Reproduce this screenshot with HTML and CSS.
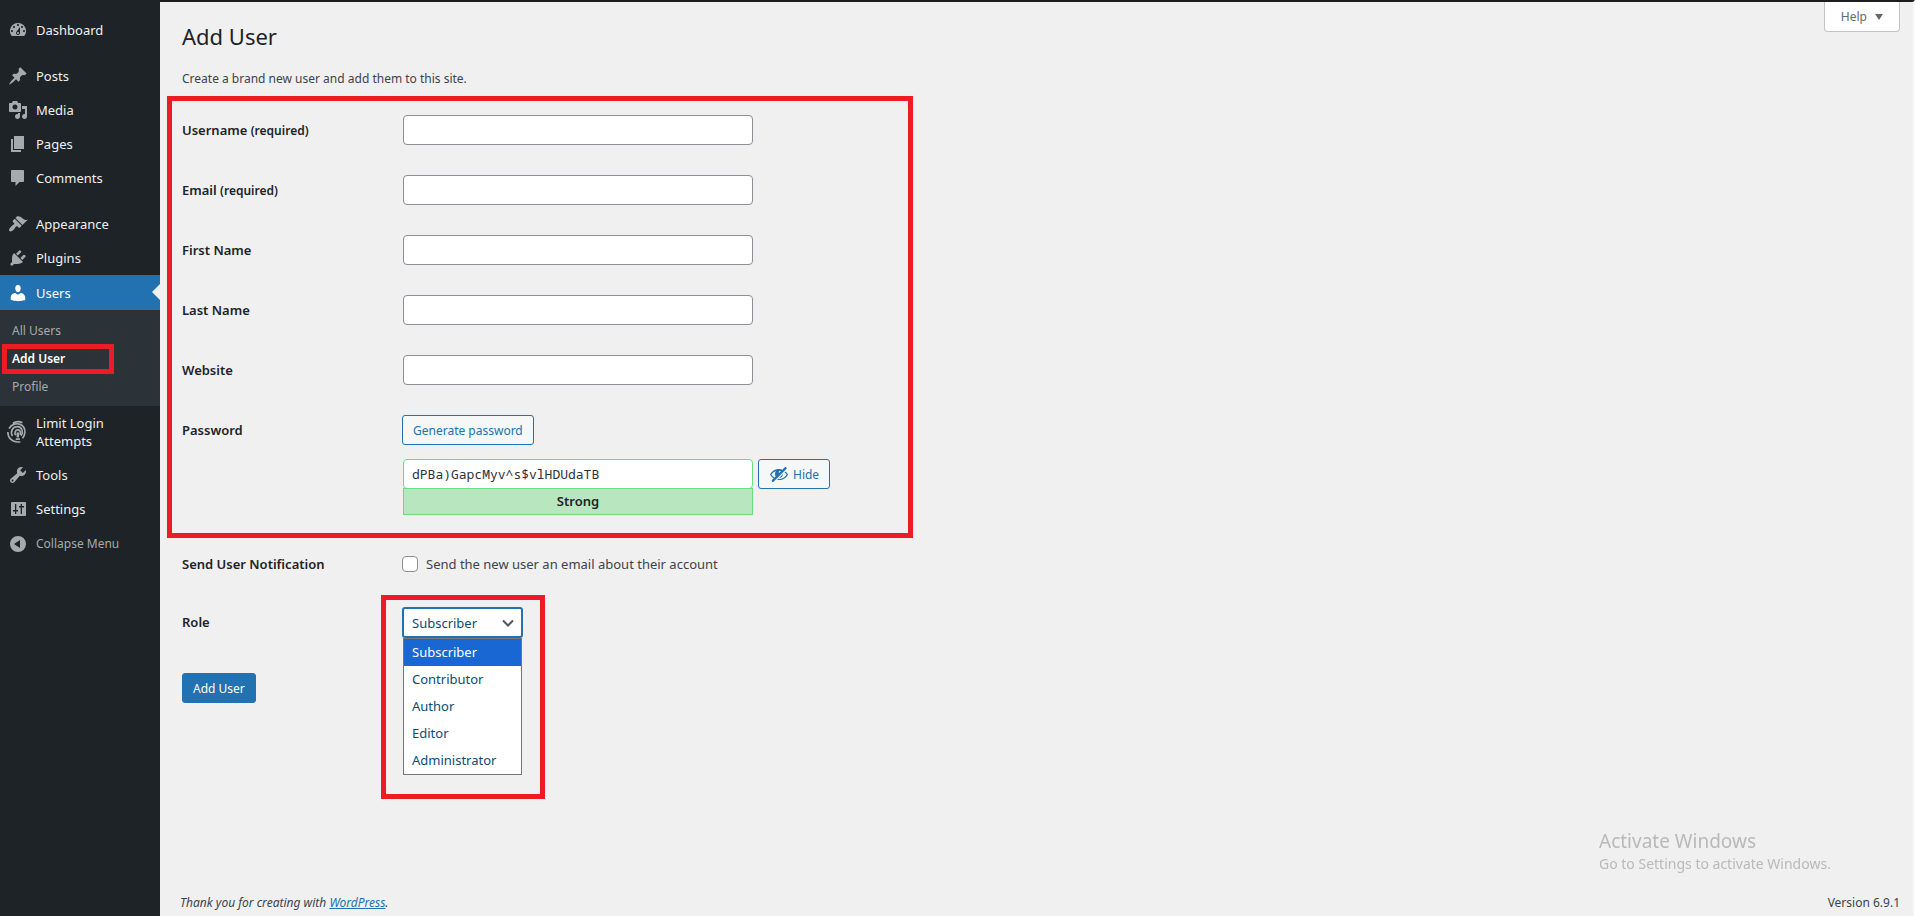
FILE: index.html
```html
<!DOCTYPE html>
<html lang="en">
    <head>
        <meta charset="UTF-8">
        <meta name="viewport" content="width=device-width, initial-scale=1.0">
        <title>Add User</title>
        <link rel="stylesheet" href="styles.css">
    </head>
    <body>
        <nav class="sidebar">
            <ul class="menu">
                <li>
                    <a href="#"><svg class="icon" viewBox="0 0 20 20"><path d="M3.76 16h12.48A7.998 7.998 0 0 0 10 3a7.998 7.998 0 0 0-6.24 13zM10 4c.55 0 1 .45 1 1s-.45 1-1 1-1-.45-1-1 .45-1 1-1zM6 6c.55 0 1 .45 1 1s-.45 1-1 1-1-.45-1-1 .45-1 1-1zm8 0c.55 0 1 .45 1 1s-.45 1-1 1-1-.45-1-1 .45-1 1-1zm-5.37 5.55L12 7v6c0 1.1-.9 2-2 2s-2-.9-2-2c0-.57.24-1.08.63-1.45zM4 10c.55 0 1 .45 1 1s-.45 1-1 1-1-.45-1-1 .45-1 1-1zm12 0c.55 0 1 .45 1 1s-.45 1-1 1-1-.45-1-1 .45-1 1-1zm-5 3c0-.55-.45-1-1-1s-1 .45-1 1 .45 1 1 1 1-.45 1-1z"/></svg>Dashboard</a>
                </li>
                <li class="group-start">
                    <a href="#"><svg class="icon" viewBox="0 0 20 20"><path d="M10.44 3.02l1.82-1.82 6.36 6.35-1.83 1.82c-1.05-.68-2.48-.57-3.41.36l-.75.75c-.92.93-1.04 2.35-.35 3.41l-1.83 1.82-2.41-2.41-2.8 2.79c-.42.42-3.38 2.71-3.8 2.29s1.86-3.39 2.28-3.81l2.79-2.79L4.1 9.36l1.83-1.82c1.05.69 2.48.57 3.4-.36l.75-.75c.93-.92 1.05-2.35.36-3.41z"/></svg>Posts</a>
                </li>
                <li>
                    <a href="#"><svg class="icon" viewBox="0 0 20 20"><path d="M13 11V4c0-.55-.45-1-1-1h-1.67L9 1H5L3.67 3H2c-.55 0-1 .45-1 1v7c0 .55.45 1 1 1h10c.55 0 1-.45 1-1zM7 4.500c1.380 0 2.500 1.120 2.500 2.500S8.380 9.500 7 9.500 4.500 8.380 4.500 7 5.620 4.500 7 4.500zM14 6h5v10.500c0 1.380-1.120 2.500-2.500 2.500S14 17.880 14 16.500s1.120-2.500 2.500-2.500c.17 0 .34.02.5.05V9h-3V6zm-4 8.050V13h2v3.500c0 1.380-1.120 2.500-2.500 2.500S7 17.880 7 16.500 8.120 14 9.500 14c.17 0 .34.02.5.05z"/></svg>Media</a>
                </li>
                <li>
                    <a href="#"><svg class="icon" viewBox="0 0 20 20"><path d="M6 15V2h10v13H6zm-1 1h8v2H3V5h2v11z"/></svg>Pages</a>
                </li>
                <li>
                    <a href="#"><svg class="icon" viewBox="0 0 20 20"><path d="M4 2h11c.6 0 1 .4 1 1v10c0 .6-.4 1-1 1h-3.500l-4 4v-4H4c-.6 0-1-.4-1-1V3c0-.6.4-1 1-1z"/></svg>Comments</a>
                </li>
                <li class="group-start">
                    <a href="#"><svg class="icon" viewBox="0 0 20 20"><path d="M14.48 11.06L7.41 3.99l1.5-1.5c.5-.56 2.3-.47 3.51.32 1.21.8 1.43 1.28 2.91 2.1 1.18.64 2.45 1.26 4.45.85zm-.71.71L6.7 4.7 4.93 6.47c-.39.39-.39 1.02 0 1.41l1.06 1.06c.39.39.39 1.03 0 1.42-.6.6-1.43 1.11-2.21 1.69-.35.26-.7.53-1.01.84C1.43 14.23.4 16.08 1.4 17.07c.99 1 2.84-.03 4.18-1.36.31-.31.58-.66.85-1.02.57-.78 1.08-1.61 1.69-2.21.39-.39 1.02-.39 1.41 0l1.06 1.06c.39.39 1.02.39 1.41 0z"/></svg>Appearance</a>
                </li>
                <li>
                    <a href="#"><svg class="icon" viewBox="0 0 20 20"><path d="M13.11 4.36L9.87 7.6 8 5.73l3.24-3.24c.35-.34 1.05-.2 1.56.32.52.51.66 1.21.31 1.55zm-8 1.77l.91-1.12 9.01 9.01-1.19.84c-.71.71-2.63 1.16-3.82 1.16H6.14L4.9 17.26c-.59.59-1.54.59-2.12 0-.59-.58-.59-1.53 0-2.12l1.24-1.24v-3.88c0-1.13.4-3.19 1.09-3.89zm7.26 3.97l3.24-3.24c.34-.35 1.04-.21 1.55.31.52.51.66 1.21.31 1.55l-3.24 3.25z"/></svg>Plugins</a>
                </li>
                <li class="current">
                    <a href="#"><svg class="icon" viewBox="0 0 20 20"><path d="M10 9.25c-2.27 0-2.73-3.44-2.73-3.44C7 4.02 7.82 2 9.97 2c2.16 0 2.98 2.02 2.71 3.81 0 0-.41 3.44-2.68 3.44zm0 2.57L12.72 10c2.39 0 4.52 2.33 4.52 4.53v2.49s-3.65 1.13-7.24 1.13c-3.65 0-7.24-1.13-7.24-1.13v-2.49c0-2.25 1.94-4.48 4.47-4.48z"/></svg>Users</a>
                    <ul class="submenu">
                        <li><a href="#">All Users</a></li>
                        <li class="active"><a href="#">Add User</a></li>
                        <li><a href="#">Profile</a></li>
                    </ul>
                </li>
                <li>
                    <a href="#" class="two-lines"><svg class="icon icon-print" viewBox="0 0 24 28"><path d="M7 3.500C11 1 15 1 18.500 3M2.500 10C5 4.500 11 3.500 15 4.500s7 5 6.500 10-2 6-3 7M1 14c0 7 5 12 12 12h3M6.500 19C3.500 13 7 7.500 12.500 7.500S20 14 17 18.500M10.500 22.500h5M10.500 18c-2-3-.5-6.500 2.500-6.500s4 3.500 2.500 6"/><path class="stem" d="M13 14.500v6"/></svg>Limit Login Attempts</a>
                </li>
                <li>
                    <a href="#"><svg class="icon" viewBox="0 0 20 20"><path d="M16.68 9.77c-1.34 1.34-3.3 1.67-4.95.99l-5.41 6.52c-.99.99-2.59.99-3.58 0s-.99-2.59 0-3.57l6.52-5.42c-.68-1.65-.35-3.61.99-4.95 1.28-1.28 3.12-1.62 4.72-1.06l-2.89 2.89 2.82 2.82 2.86-2.87c.53 1.58.18 3.39-1.08 4.65zM3.81 16.21c.4.39 1.04.39 1.43 0 .4-.4.4-1.04 0-1.43-.39-.4-1.03-.4-1.43 0-.39.39-.39 1.03 0 1.43z"/></svg>Tools</a>
                </li>
                <li>
                    <a href="#"><svg class="icon" viewBox="0 0 20 20"><path fill-rule="evenodd" d="M4 3h13c.55 0 1 .45 1 1v12c0 .55-.45 1-1 1H4c-.55 0-1-.45-1-1V4c0-.55.45-1 1-1zM7 5v6H5v1.500h2V15h1.300v-2.500H10V11H8.300V5zM12.700 5v2H11v1.500h1.700V15H14V8.500h2V7h-2V5z"/></svg>Settings</a>
                </li>
                <li class="collapse">
                    <a href="#"><svg class="icon" viewBox="0 0 20 20"><path fill-rule="evenodd" d="M10 2a8 8 0 1 1 0 16 8 8 0 0 1 0-16zm2 4l-6 4 6 4z"/></svg>Collapse Menu</a>
                </li>
            </ul>
        </nav>

        <div class="content">
            <button type="button" class="help">Help <span class="arrow"></span></button>

            <main>
                <h1>Add User</h1>
                <p class="intro">Create a brand new user and add them to this site.</p>

                <form>
                    <div class="details">
                        <div class="row">
                            <label for="username">Username <span class="required">(required)</span></label>
                            <input type="text" id="username">
                        </div>
                        <div class="row">
                            <label for="email">Email <span class="required">(required)</span></label>
                            <input type="email" id="email">
                        </div>
                        <div class="row">
                            <label for="firstName">First Name</label>
                            <input type="text" id="firstName">
                        </div>
                        <div class="row">
                            <label for="lastName">Last Name</label>
                            <input type="text" id="lastName">
                        </div>
                        <div class="row">
                            <label for="website">Website</label>
                            <input type="url" id="website">
                        </div>
                        <div class="row">
                            <label for="password">Password</label>
                            <div class="password">
                                <button type="button" class="button">Generate password</button>
                                <div class="password-line">
                                    <div class="password-field">
                                        <input type="text" id="password" value="dPBa)GapcMyv^s$vlHDUdaTB">
                                        <div class="strength">Strong</div>
                                    </div>
                                    <button type="button" class="button"><svg class="icon" viewBox="0 0 20 20"><path d="M17.2 3.3l.16.17c.39.39.39 1.02 0 1.41L4.55 17.7c-.39.39-1.03.39-1.41 0l-.17-.17c-.39-.39-.39-1.02 0-1.41l1.59-1.6c-1.57-1-2.76-2.3-3.56-3.93.81-1.65 2.03-2.98 3.64-3.99S8.04 5.09 10 5.09c1.2 0 2.33.21 3.4.6l2.38-2.39c.39-.39 1.03-.39 1.42 0zm-7.09 4.01c-.23.25-.34.54-.34.88 0 .31.12.58.31.81l1.8-1.79c-.13-.12-.28-.21-.45-.26-.11-.01-.28-.03-.49-.04-.33.03-.6.16-.83.4zM2.4 10.59c.69 1.23 1.71 2.25 3.05 3.05l1.28-1.28c-.51-.69-.77-1.47-.77-2.36 0-1.06.36-1.98 1.09-2.76-1.04.27-1.96.7-2.76 1.26-.8.58-1.43 1.27-1.89 2.09zm13.22-2.13l.96-.96c1.02.86 1.83 1.89 2.42 3.09-.81 1.65-2.03 2.98-3.64 3.99s-3.4 1.51-5.36 1.51c-.63 0-1.24-.07-1.83-.18l1.07-1.07c.25.02.5.05.76.05 1.63 0 3.13-.4 4.5-1.21s2.4-1.84 3.1-3.09c-.46-.82-1.09-1.51-1.89-2.09-.03-.01-.06-.03-.09-.04zm-5.58 5.58l4-4c-.01 1.1-.41 2.04-1.18 2.81-.78.78-1.72 1.18-2.82 1.19z"/></svg>Hide</button>
                                </div>
                            </div>
                        </div>
                    </div>

                    <div class="row">
                        <span class="row-title">Send User Notification</span>
                        <label class="check" for="notify"><input type="checkbox" id="notify">Send the new user an email about their account</label>
                    </div>
                    <div class="row">
                        <label for="role">Role</label>
                        <div class="role">
                            <select id="role">
                                <option>Subscriber</option>
                                <option>Contributor</option>
                                <option>Author</option>
                                <option>Editor</option>
                                <option>Administrator</option>
                            </select>
                            <svg class="chevron" viewBox="0 0 12 8"><path d="M1 1.500l5 5 5-5"/></svg>
                            <ul class="role-list">
                                <li class="selected">Subscriber</li>
                                <li>Contributor</li>
                                <li>Author</li>
                                <li>Editor</li>
                                <li>Administrator</li>
                            </ul>
                        </div>
                    </div>
                    <button type="submit" class="button primary">Add User</button>
                </form>
            </main>

            <footer>
                <em>Thank you for creating with <a href="#">WordPress</a>.</em>
                <span>Version 6.9.1</span>
            </footer>
        </div>

        <div class="activate">
            <p class="activate-title">Activate Windows</p>
            <p>Go to Settings to activate Windows.</p>
        </div>
    </body>
</html>
```

FILE: styles.css
```css
*,
*::before,
*::after {
    box-sizing: border-box;
}
body {
    display: flex;
    min-height: 100vh;
    margin: 0;
    background-color: #f0f0f0;
    color: #3c434a;
    font-family: "Noto Sans", "Open Sans", sans-serif;
    font-size: 12px;
    line-height: 18px;
}
ul {
    list-style-type: none;
    margin: 0;
    padding: 0;
}
p {
    margin: 0;
}
input,
select,
button {
    font-family: inherit;
    font-size: inherit;
}
.icon {
    width: 20px;
    height: 20px;
    flex: none;
    fill: currentColor;
}

/* sidebar */
.sidebar {
    flex: none;
    width: 160px;
    padding-top: 13px;
    background-color: #1d2327;
}
.menu a {
    display: flex;
    align-items: center;
    gap: 8px;
    min-height: 34px;
    padding: 8px;
    color: #f0f0f1;
    font-size: 13px;
    text-decoration: none;
}
.menu > li > a {
    padding-top: 7px;
    padding-bottom: 7px;
}
.menu > li > .two-lines {
    padding-top: 8px;
    padding-bottom: 8px;
}
.menu .icon {
    color: #a7aaad;
}
.menu .icon-print {
    height: 26px;
    margin-left: -1px;
    margin-right: 1px;
    fill: none;
    stroke: currentColor;
    stroke-width: 2;
}
.icon-print .stem {
    stroke-width: 3;
}
.group-start {
    margin-top: 12px;
}
.menu > .current > a {
    position: relative;
    min-height: 35px;
    background-color: #2271b1;
    color: #fff;
}
.current > a::after {
    content: "";
    position: absolute;
    top: 9px;
    right: 0;
    border: 8px solid transparent;
    border-left-width: 0;
    border-right-color: #f0f0f0;
}
.menu .current .icon {
    color: #fff;
}
.submenu {
    padding: 7px 0 5px;
    background-color: #2c3338;
}
.submenu a {
    min-height: 28px;
    padding: 5px 12px;
    color: #a7aaad;
    font-size: 12px;
}
.submenu .active {
    position: relative;
}
.submenu .active a {
    color: #fff;
    font-weight: 600;
}
.submenu .active::after {
    content: "";
    position: absolute;
    inset: -1px 46px -1px 2px;
    border: 5px solid #ed1c24;
}
.menu .collapse a {
    min-height: 36px;
    color: #a7aaad;
    font-size: 12px;
}

/* content */
.content {
    position: relative;
    flex: 1;
    display: flex;
    flex-direction: column;
    border-top: 2px solid #1e1e1e;
    border-right: 2px solid #fafafa;
    padding: 17px 13px 4px 22px;
}
.help {
    position: absolute;
    top: 0;
    right: 13px;
    display: flex;
    align-items: center;
    gap: 8px;
    height: 30px;
    padding: 0 16px;
    border: 1px solid #c3c4c7;
    border-top: none;
    border-radius: 0 0 4px 4px;
    background-color: #fff;
    color: #646970;
}
.arrow {
    border: 4px solid transparent;
    border-top: 6px solid #646970;
    border-bottom-width: 0;
}
h1 {
    margin: 0;
    color: #1d2327;
    font-size: 22px;
    font-weight: 400;
    line-height: 34px;
}
.intro {
    margin-top: 17px;
}
.details {
    max-width: 746px;
    margin: 8px 0 11px -15px;
    padding: 14px 10px 18px;
    border: 5px solid #ed1c24;
}
.row {
    display: grid;
    grid-template-columns: 220px 1fr;
    align-items: start;
    margin-bottom: 28px;
}
.details .row {
    margin-bottom: 30px;
}
.details .row:last-child {
    margin-bottom: 0;
}
.row > label,
.row-title {
    color: #1d2327;
    font-size: 13px;
    font-weight: 600;
    line-height: 30px;
}
.required {
    font-size: 12px;
    line-height: 18px;
}
.details input {
    width: 350px;
    height: 30px;
    margin: 0 1px;
    padding: 0 8px;
    border: 1px solid #8c8f94;
    border-radius: 4px;
    background-color: #fff;
    color: #2c3338;
}
.password {
    display: flex;
    flex-direction: column;
    align-items: flex-start;
    gap: 14px;
}
.password-line {
    display: flex;
    align-items: flex-start;
    gap: 4px;
}
.password-field {
    display: flex;
    flex-direction: column;
}
.details .password-field input {
    border-color: #68de7c;
    font-family: "Noto Sans Mono", "DejaVu Sans Mono", monospace;
    font-size: 13px;
}
.strength {
    margin: -1px 1px 0;
    border: 1px solid #68de7c;
    background-color: #b8e6bf;
    color: #1d2327;
    font-size: 13px;
    font-weight: 600;
    line-height: 25px;
    text-align: center;
}
.button {
    display: flex;
    align-items: center;
    gap: 4px;
    height: 30px;
    padding: 0 10px;
    border: 1px solid #2271b1;
    border-radius: 3px;
    background-color: #f6f7f7;
    color: #2271b1;
}
.primary {
    margin-top: 35px;
    background-color: #2271b1;
    color: #fff;
}
.row > .check {
    display: flex;
    align-items: center;
    gap: 8px;
    color: #3c434a;
    font-weight: 400;
}
.check input {
    appearance: none;
    width: 16px;
    height: 16px;
    margin: 0;
    border: 1px solid #8c8f94;
    border-radius: 4px;
    background-color: #fff;
}

/* role drop-down */
.role {
    position: relative;
    width: 121px;
}
.role::after {
    content: "";
    position: absolute;
    top: -12px;
    left: -21px;
    width: 164px;
    height: 204px;
    border: 5px solid #ed1c24;
}
.role select {
    appearance: none;
    display: block;
    width: 100%;
    height: 31px;
    padding: 0 8px;
    border: 2px solid #2271b1;
    border-radius: 3px;
    background-color: #fff;
    color: #0a4b78;
    font-size: 13px;
}
.chevron {
    position: absolute;
    top: 12px;
    right: 9px;
    width: 12px;
    height: 8px;
    fill: none;
    stroke: #50575e;
    stroke-width: 2;
}
.role-list {
    position: absolute;
    top: 100%;
    left: 1px;
    right: 1px;
    border: 1px solid #767676;
    background-color: #fff;
    color: #0a4b78;
    font-size: 13px;
    line-height: 27px;
}
.role-list li {
    padding-left: 8px;
}
.role-list .selected {
    background-color: #1967d2;
    color: #fff;
}

footer {
    display: flex;
    justify-content: space-between;
    margin-top: auto;
    margin-left: -2px;
}
footer a {
    color: #2271b1;
}

/* desktop watermark */
.activate {
    position: fixed;
    right: 76px;
    bottom: 42px;
    width: 240px;
    color: #b9b9b9;
    font-size: 14px;
    line-height: 20px;
}
.activate-title {
    font-size: 19px;
    line-height: 26px;
}
```
